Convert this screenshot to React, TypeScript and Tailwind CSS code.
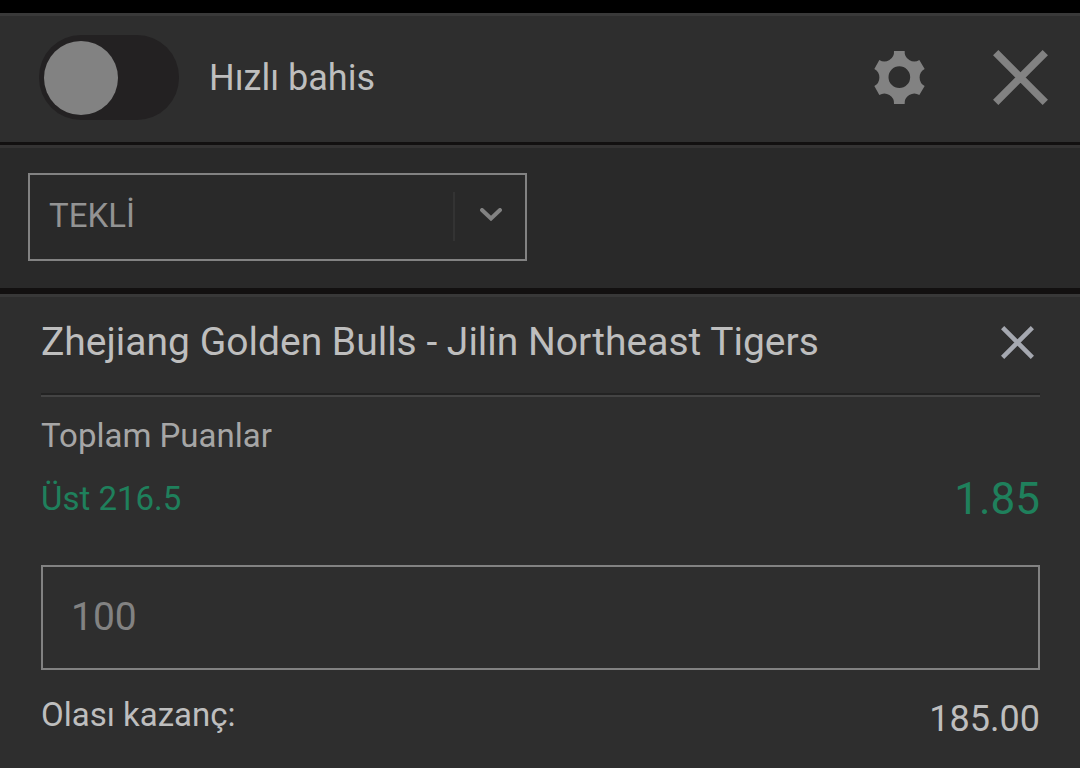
import { useState } from "react";

const ODDS = 1.85;

const GearIcon = () => (
    <svg viewBox="73 63 153 159" className="h-[53px] w-[51px] fill-[#828282]" aria-hidden="true">
        <path
            fillRule="evenodd"
            d="M133 63H165A29 29 0 0 0 209 90L225 117A29 29 0 0 0 225 168L209 195A29 29 0 0 0 165 222H133A29 29 0 0 0 89 195L74 168A29 29 0 0 0 74 117L89 90A29 29 0 0 0 133 63ZM149 109A32.500 32.500 0 1 0 149 174A32.500 32.500 0 1 0 149 109Z"
        />
    </svg>
);

const CrossIcon = ({ className, thickness }: { className: string; thickness: number }) => {
    // keep the square ends inside the box
    const inset = thickness * 0.36;
    const far = 55 - inset;
    return (
        <svg viewBox="0 0 55 55" className={className} strokeWidth={thickness} aria-hidden="true">
            <path d={`M${inset} ${inset}L${far} ${far}M${far} ${inset}L${inset} ${far}`} />
        </svg>
    );
};

const Header = () => (
    <header className="flex items-center justify-between border-t-3 border-[#393939] bg-[#2e2e2e] pt-[19px] pr-8 pb-[22px] pl-[39px]">
        <label className="flex items-center gap-[30px] text-[36px] leading-10 text-[#bebebe]">
            <input
                type="checkbox"
                role="switch"
                className="flex h-[85px] w-[140px] appearance-none items-center rounded-[42px] bg-[#232122] px-[5px] before:size-[74px] before:rounded-full before:bg-[#828282] checked:justify-end"
            />
            Hızlı bahis
        </label>
        <div className="flex items-center gap-[68px]">
            <button type="button" aria-label="Ayarlar">
                <GearIcon />
            </button>
            <button type="button" aria-label="Kapat">
                <CrossIcon className="size-[55px] stroke-[#828282]" thickness={7.5} />
            </button>
        </div>
    </header>
);

const BetType = () => (
    <div className="border-t-3 border-[#343333] bg-[#292929] px-7 pt-[25px] pb-[27px]">
        <div className="relative w-[499px] max-w-full">
            <select
                aria-label="Bahis türü"
                className="h-[88px] w-full appearance-none border-2 border-[#828282] bg-transparent pr-20 pb-[3px] pl-[19px] text-[33px] text-[#939393]"
            >
                <option>TEKLİ</option>
            </select>
            <div className="pointer-events-none absolute inset-y-0 right-0 flex w-[74px] items-center pb-0.5">
                <span className="h-[49px] w-0.5 bg-[#333333]" />
                <svg viewBox="0 0 22 13" className="mx-auto mb-1 h-[13px] w-[22px] fill-none stroke-[#828282]" strokeWidth="4" strokeLinecap="round" aria-hidden="true">
                    <path d="M2 2L11 10.500L20 2" />
                </svg>
            </div>
        </div>
    </div>
);

const Selection = () => {
    const [stake, setStake] = useState("100");

    return (
        <main className="grow border-t-3 border-[#383838] bg-[#2e2e2e] pr-10 pl-[41px]">
            <div className="flex h-24 items-center justify-between pr-[6px] pb-[6px]">
                <h1 className="text-[39px] leading-12 text-[#bebebe]">Zhejiang Golden Bulls - Jilin Northeast Tigers</h1>
                <button type="button" aria-label="Bahsi sil">
                    <CrossIcon className="size-[33px] stroke-[#a5a8b0]" thickness={7.5} />
                </button>
            </div>
            <hr className="h-1 border-t-2 border-b-2 border-t-[#232323] border-b-[#444444]" />

            <p className="mt-4 text-[33px] leading-[45px] text-[#a6a6a6]">Toplam Puanlar</p>
            <div className="mt-[14px] flex items-center justify-between text-[#1f805c]">
                <span className="text-[33px] leading-[54px]">Üst 216.5</span>
                <span className="text-[44px] leading-[54px]">{ODDS}</span>
            </div>

            <input
                type="text"
                inputMode="decimal"
                aria-label="Bahis miktarı"
                value={stake}
                onChange={(e) => setStake(e.target.value)}
                className="mt-[39px] h-[105px] w-full border-2 border-[#828282] bg-transparent px-7 pb-0.5 text-[39px] text-[#828282] outline-none"
            />

            <div className="mt-[25px] flex items-start justify-between text-[#bebebe]">
                <span className="text-[33px] leading-10">Olası kazanç:</span>
                <span className="text-[36px] leading-12">{(Number(stake) * ODDS).toFixed(2)}</span>
            </div>
        </main>
    );
};

export default function App() {
    return (
        <div className="flex min-h-screen flex-col bg-[#121010] pt-[13px] font-['Roboto',sans-serif] shadow-[inset_0_13px_0_#000000]">
            <Header />
            <div className="mt-[3px]">
                <BetType />
            </div>
            <div className="mt-[6px] flex grow flex-col">
                <Selection />
            </div>
        </div>
    );
}
